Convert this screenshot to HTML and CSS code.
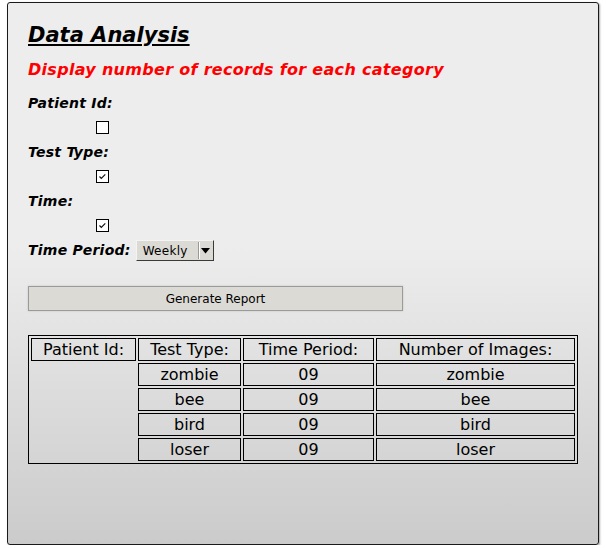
FILE: index.html
```html
<!DOCTYPE html>
<html>
<head>
<meta charset="utf-8">
<link rel="stylesheet" href="styles.css">
</head>
<body>
<div class="panel">
  <h1 class="title">Data Analysis</h1>
  <h2 class="subtitle">Display number of records for each category</h2>
  <div class="field-label">Patient Id:</div>
  <div class="check-row"><span class="check"></span></div>
  <div class="field-label">Test Type:</div>
  <div class="check-row"><span class="check"><svg width="11" height="11" viewBox="0 0 11 11"><path d="M2.5 5.5 L4.3 7.3 L8.3 3.3" fill="none" stroke="#111" stroke-width="1.2"/></svg></span></div>
  <div class="field-label">Time:</div>
  <div class="check-row"><span class="check"><svg width="11" height="11" viewBox="0 0 11 11"><path d="M2.5 5.5 L4.3 7.3 L8.3 3.3" fill="none" stroke="#111" stroke-width="1.2"/></svg></span></div>
  <div class="period-row">
    <span class="field-label inline">Time Period:</span>
    <div class="select">
      <span class="select-text">Weekly</span>
      <span class="select-sep"></span>
      <span class="select-arrow"><svg width="9" height="6" viewBox="0 0 9 6"><path d="M0 0 H9 L4.5 5.5 Z" fill="#000"/></svg></span>
    </div>
  </div>
  <button class="gen-btn">Generate Report</button>
  <table class="report">
    <tr>
      <td class="cell">Patient Id:</td>
      <td class="cell">Test Type:</td>
      <td class="cell">Time Period:</td>
      <td class="cell">Number of Images:</td>
    </tr>
    <tr><td class="blank"></td><td class="cell">zombie</td><td class="cell">09</td><td class="cell">zombie</td></tr>
    <tr><td class="blank"></td><td class="cell">bee</td><td class="cell">09</td><td class="cell">bee</td></tr>
    <tr><td class="blank"></td><td class="cell">bird</td><td class="cell">09</td><td class="cell">bird</td></tr>
    <tr><td class="blank"></td><td class="cell">loser</td><td class="cell">09</td><td class="cell">loser</td></tr>
  </table>
</div>
</body>
</html>
```
FILE: styles.css
```css
html, body {
  margin: 0;
  padding: 0;
  background: #ffffff;
}
body {
  font-family: "DejaVu Sans", Verdana, sans-serif;
}
.panel {
  box-sizing: border-box;
  margin: 2px 0 0 7px;
  width: 592px;
  height: 543px;
  border: 1px solid #1a1a1a;
  border-radius: 3px;
  box-shadow: 1px 1px 2px rgba(0,0,0,0.35);
  background: linear-gradient(#ededed 0%, #ededed 45%, #cbcbcb 100%);
  padding: 20px 20px 0 20px;
}
.title {
  margin: 0;
  font-size: 21px;
  line-height: 24px;
  font-weight: bold;
  font-style: oblique;
  text-decoration: underline;
  text-underline-offset: 2px;
  color: #000;
}
.subtitle {
  margin: 13px 0 0 0;
  font-size: 16px;
  line-height: 19px;
  font-weight: bold;
  font-style: oblique;
  letter-spacing: 0.3px;
  color: #ff0000;
}
.field-label {
  margin-top: 16px;
  font-size: 14px;
  line-height: 17px;
  font-weight: bold;
  font-style: oblique;
  letter-spacing: 0.25px;
  color: #000;
}
.check-row + .field-label {
  margin-top: 10px;
}
.field-label.inline {
  margin-top: 0;
}
.check-row {
  margin-top: 9px;
  padding-left: 68px;
  height: 13px;
}
.check {
  display: block;
  box-sizing: border-box;
  width: 13px;
  height: 13px;
  border: 1px solid #000;
  background: #fff;
}
.check svg {
  display: block;
}
.period-row {
  margin-top: 8px;
  display: flex;
  align-items: center;
  gap: 5px;
}
.select {
  box-sizing: border-box;
  width: 78px;
  height: 21px;
  display: flex;
  align-items: center;
  background: #dcdad5;
  border: 1px solid;
  border-color: #f4f4f2 #3a3a3a #3a3a3a #f4f4f2;
  font-size: 12px;
}
.select-text {
  padding-left: 6px;
  width: 50px;
  letter-spacing: 0.3px;
  color: #000;
}
.select-sep {
  width: 1px;
  height: 17px;
  background: #999;
  box-shadow: 1px 0 0 #fff;
  margin-left: 5px;
}
.select-arrow {
  flex: 1;
  display: flex;
  justify-content: center;
  align-items: center;
  padding-top: 1px;
}
.select-arrow svg {
  display: block;
}
.gen-btn {
  display: block;
  box-sizing: border-box;
  margin-top: 25px;
  width: 375px;
  height: 25px;
  background: #dcdad5;
  border: 1px solid #9a9a9a;
  box-shadow: 0 0 2px rgba(0,0,0,0.15);
  font-family: "DejaVu Sans", Verdana, sans-serif;
  font-size: 12px;
  color: #000;
  padding: 0;
}
.report {
  margin-top: 24px;
  width: 550px;
  border: 1px solid #000;
  border-spacing: 2px;
  font-size: 16px;
}
.cell {
  border: 1px solid #000;
  text-align: center;
  padding: 0;
  height: 21px;
  line-height: 19px;
  color: #000;
}
.blank {
  border: none;
  padding: 0;
}
.report tr td:nth-child(1) { width: 103px; }
.report tr td:nth-child(2) { width: 101px; }
.report tr td:nth-child(3) { width: 129px; }
```
